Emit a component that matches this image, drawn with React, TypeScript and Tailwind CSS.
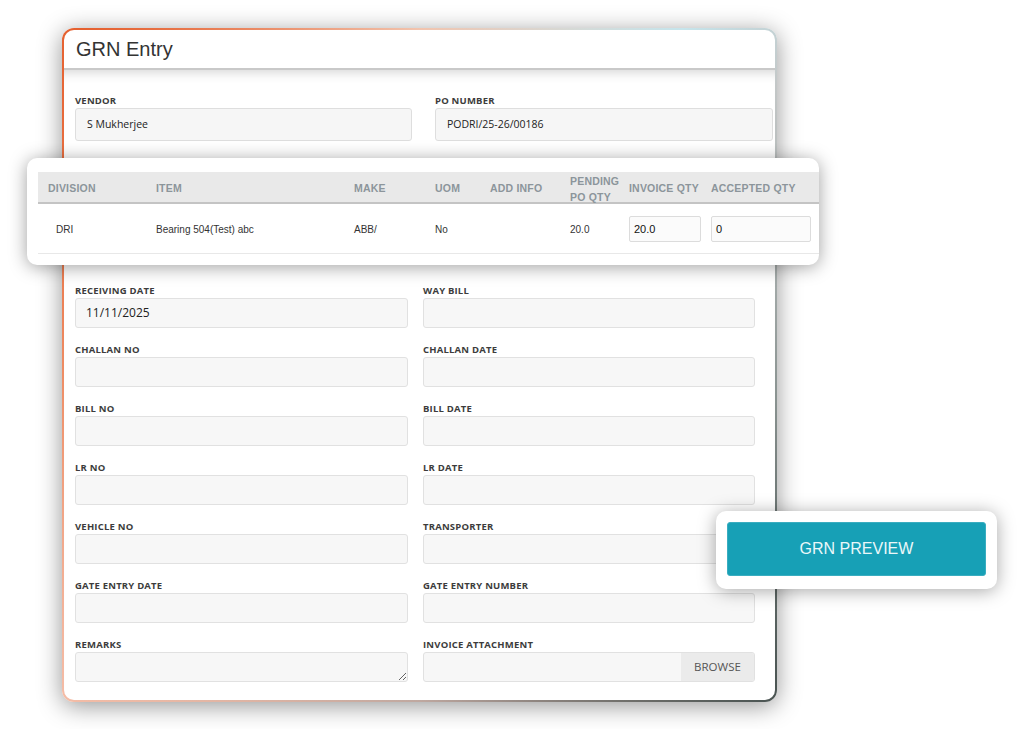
import React from "react";

const labelCls =
  "block h-[12px] leading-[12px] mb-[1px] text-[9.5px] font-bold uppercase tracking-[0.2px] text-[#3c3c3c] [font-family:'Open_Sans',sans-serif]";
const inputCls =
  "h-[30px] rounded-[3px] border border-[#e1e1e1] bg-[#f7f7f7] flex items-center px-[10px] text-[12px] text-[#222] [font-family:'Open_Sans',sans-serif]";

function Field({ label, value }: { label: string; value?: string }) {
  return (
    <div>
      <span className={labelCls}>{label}</span>
      <div className={inputCls}>{value}</div>
    </div>
  );
}

const headers: { t: React.ReactNode }[] = [
  { t: "DIVISION" },
  { t: "ITEM" },
  { t: "MAKE" },
  { t: "UOM" },
  { t: "ADD INFO" },
  {
    t: (
      <span className="leading-[16px]">
        PENDING
        <br />
        PO QTY
      </span>
    ),
  },
  { t: "INVOICE QTY" },
  { t: "ACCEPTED QTY" },
];

export default function App() {
  return (
    <div className="relative w-[1024px] h-[729px] overflow-hidden bg-white pt-[28px] pl-[62px]">
      {/* Main card */}
      <div className="w-[715px] rounded-[12px] p-[2px] bg-[conic-gradient(from_0deg,#f2c4ae_0deg,#c6e5ec_38deg,#c3c7c7_52deg,#8a9391_95deg,#4a5452_133deg,#bfa8a0_180deg,#f4bca6_227deg,#ee8b62_270deg,#e5602f_315deg,#f2c4ae_360deg)] shadow-[0_4px_24px_rgba(0,0,0,0.42)]">
        <div className="rounded-[10px] bg-white overflow-hidden">
          <div className="h-[40px] border-b-2 border-[#c9c9c9] px-[12px] flex items-center text-[20px] text-[#333] [font-family:'Liberation_Sans',Arial,sans-serif]">
            GRN Entry
          </div>
          <div className="pt-[25px] pl-[11px] pr-[2px] pb-[18px] shadow-[inset_0_12px_12px_-10px_rgba(0,0,0,0.18)]">
            <div className="grid grid-cols-[337px_338px] gap-x-[23px]">
              <div>
                <span className={labelCls}>Vendor</span>
                <div className="h-[33px] rounded-[3px] border border-[#dedede] bg-[#f6f6f6] flex items-center px-[11px] text-[10.5px] text-[#222] [font-family:'Open_Sans',sans-serif]">
                  S Mukherjee
                </div>
              </div>
              <div>
                <span className={labelCls}>PO Number</span>
                <div className="h-[33px] rounded-[3px] border border-[#dedede] bg-[#f6f6f6] flex items-center px-[11px] text-[10.5px] text-[#222] [font-family:'Open_Sans',sans-serif]">
                  PODRI/25-26/00186
                </div>
              </div>
            </div>

            <div className="mt-[144px] mr-[18px] grid grid-cols-[333px_332px] gap-x-[15px] gap-y-[16px]">
              <Field label="Receiving Date" value="11/11/2025" />
              <Field label="Way Bill" />
              <Field label="Challan No" />
              <Field label="Challan Date" />
              <Field label="Bill No" />
              <Field label="Bill Date" />
              <Field label="LR No" />
              <Field label="LR Date" />
              <Field label="Vehicle No" />
              <Field label="Transporter" />
              <Field label="Gate Entry Date" />
              <Field label="Gate Entry Number" />
              <div>
                <span className={labelCls}>Remarks</span>
                <textarea
                  readOnly
                  className="block w-full h-[30px] rounded-[3px] border border-[#e1e1e1] bg-[#f7f7f7] resize-y"
                />
              </div>
              <div>
                <span className={labelCls}>Invoice Attachment</span>
                <div className="h-[30px] rounded-[3px] border border-[#e1e1e1] bg-[#f7f7f7] flex overflow-hidden">
                  <div className="flex-1" />
                  <div className="w-[73px] bg-[#ebebeb] flex items-center justify-center text-[11.5px] text-[#555] [font-family:'Open_Sans',sans-serif]">
                    BROWSE
                  </div>
                </div>
              </div>
            </div>
          </div>
        </div>
      </div>

      {/* Table overlay card */}
      <div className="absolute left-[27px] top-[158px] w-[792px] h-[107px] rounded-[10px] bg-white overflow-hidden pt-[14px] pl-[11px] shadow-[0_2px_18px_rgba(0,0,0,0.38)] [font-family:'Liberation_Sans',Arial,sans-serif]">
        <div className="grid grid-cols-[108px_198px_81px_55px_80px_59px_82px_1fr] h-[32px] bg-[#e9e9e9] border-b-2 border-[#c4c4c4] text-[10.5px] font-bold tracking-[0.2px] text-[#8c959b]">
          {headers.map((h, i) => (
            <div key={i} className="flex items-center pl-[10px] pt-[1px]">
              {h.t}
            </div>
          ))}
        </div>
        <div className="grid grid-cols-[108px_198px_81px_55px_80px_59px_82px_1fr] h-[50px] border-b border-[#e8e8e8] text-[10px] text-[#333] items-center pt-[1px]">
          <div className="pl-[18px]">DRI</div>
          <div className="pl-[10px]">Bearing 504(Test) abc</div>
          <div className="pl-[10px]">ABB/</div>
          <div className="pl-[10px]">No</div>
          <div className="pl-[10px]"></div>
          <div className="pl-[10px]">20.0</div>
          <div className="pl-[10px]">
            <div className="w-[72px] h-[26px] border border-[#dcdcdc] rounded-[2px] bg-[#fbfbfb] flex items-center pl-[4px] text-[11px] text-[#111]">
              20.0
            </div>
          </div>
          <div className="pl-[10px]">
            <div className="w-[100px] h-[26px] border border-[#dcdcdc] rounded-[2px] bg-[#fbfbfb] flex items-center pl-[4px] text-[11px] text-[#111]">
              0
            </div>
          </div>
        </div>
      </div>

      {/* Button overlay card */}
      <div className="absolute left-[716px] top-[511px] w-[281px] h-[78px] rounded-[10px] bg-white pt-[11px] px-[11px] shadow-[0_2px_18px_rgba(0,0,0,0.35)]">
        <div className="h-[54px] rounded-[3px] bg-[#17a0b6] border border-[#3aadc0] flex items-center justify-center text-[16px] text-[#eaf7f9] [font-family:'Liberation_Sans',Arial,sans-serif]">
          GRN PREVIEW
        </div>
      </div>
    </div>
  );
}
